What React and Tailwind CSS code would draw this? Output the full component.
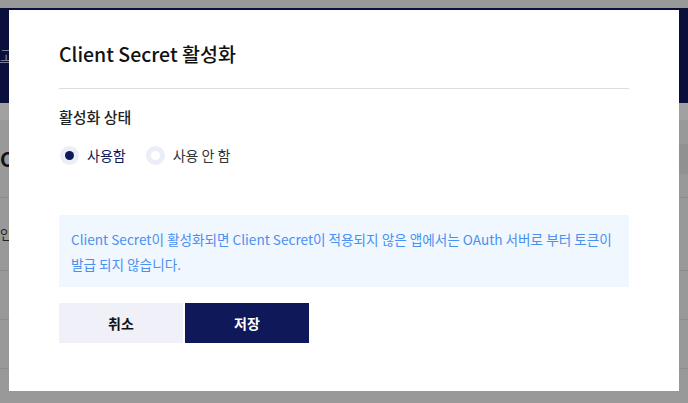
import React, { useState } from 'react';

const font = { fontFamily: '"Noto Sans CJK KR", "Noto Sans", sans-serif' };

const Radio = ({ checked, label, onClick }) => (
  <button type="button" onClick={onClick} className="flex items-center gap-[8px]">
    <span className="w-[19px] h-[19px] rounded-full bg-[#eceef7] flex items-center justify-center">
      <span className={`w-[9px] h-[9px] rounded-full ${checked ? 'bg-[#0f1859]' : 'bg-white'}`} />
    </span>
    <span className={`text-[14px] ${checked ? 'text-[#0f1859]' : 'text-[#333]'}`}>{label}</span>
  </button>
);

const App = () => {
  const [enabled, setEnabled] = useState(true);

  return (
    <div className="relative w-[688px] h-[403px] overflow-hidden bg-[#999999]" style={font}>
      {/* dimmed page behind */}
      <div className="flex flex-col h-full">
        <div className="h-[8px]" />
        <div className="h-[95px] bg-[#0b0f3c] flex items-center text-[15px] text-[#7c7e96] underline">고</div>
        <div className="h-[17px] bg-[#a1a1a1]" />
        <div className="h-[78px] border-b border-[#8c8c8c] flex items-center justify-between">
          <span className="text-[20px] font-bold text-[#111]">Cl</span>
          <span className="w-[9px] h-[30px] bg-[#919191]" />
        </div>
        <div className="h-[73px] border-b border-[#8c8c8c] flex items-center text-[13px] text-[#222]">인</div>
        <div className="h-[49px] border-b border-[#8c8c8c]" />
        <div className="h-[49px] border-b border-[#8c8c8c]" />
      </div>

      {/* modal */}
      <div className="absolute left-[9px] top-[10px] w-[670px] h-[381px] bg-white px-[50px] pt-[30px]">
        <h2 className="text-[19.5px] font-medium text-[#111] leading-[28px]">Client Secret 활성화</h2>
        <div className="mt-[20px] border-t border-[#dddddd]" />
        <div className="mt-[17px] text-[15px] font-medium text-[#222] leading-[22px]">활성화 상태</div>
        <div className="mt-[17px] flex items-center gap-[20px] pl-[1px]">
          <Radio checked={enabled} label="사용함" onClick={() => setEnabled(true)} />
          <Radio checked={!enabled} label="사용 안 함" onClick={() => setEnabled(false)} />
        </div>
        <div className="mt-[49px] h-[72px] bg-[#f0f7ff] px-[12px] pt-[12px] text-[13.6px] leading-[25px] text-[#4a90f0] whitespace-nowrap">
          Client Secret이 활성화되면 Client Secret이 적용되지 않은 앱에서는 OAuth 서버로 부터 토큰이
          <br />
          발급 되지 않습니다.
        </div>
        <div className="mt-[16px] flex gap-[2px]">
          <button type="button" className="w-[124px] h-[40px] bg-[#f0f0f8] text-[14px] font-bold text-[#111]">취소</button>
          <button type="button" className="w-[124px] h-[40px] bg-[#0f1859] text-[14px] font-bold text-white">저장</button>
        </div>
      </div>
    </div>
  );
};

export default App;
